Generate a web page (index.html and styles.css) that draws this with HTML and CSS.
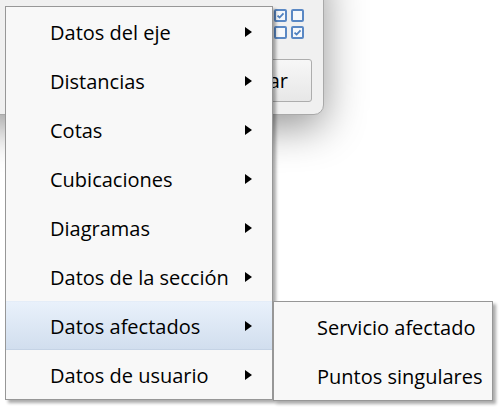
FILE: index.html
```html
<!DOCTYPE html>
<html lang="es">
<head>
<meta charset="utf-8">
<title>Menú</title>
<link rel="stylesheet" href="styles.css">
</head>
<body>
<div class="desktop">
  <div class="dialog">
    <div class="checks">
      <span class="box"><svg viewBox="0 0 9 9" width="9" height="9"><polyline points="1.5,4.6 3.6,6.5 7.5,2.4" fill="none" stroke="#4f80bf" stroke-width="1.8"/></svg></span>
      <span class="box"></span>
      <span class="box"></span>
      <span class="box"><svg viewBox="0 0 9 9" width="9" height="9"><polyline points="1.5,4.6 3.6,6.5 7.5,2.4" fill="none" stroke="#4f80bf" stroke-width="1.8"/></svg></span>
    </div>
    <button class="btn">Aceptar</button>
  </div>

  <div class="menu">
    <div class="item"><span>Datos del eje</span><i class="arrow"></i></div>
    <div class="item"><span>Distancias</span><i class="arrow"></i></div>
    <div class="item"><span>Cotas</span><i class="arrow"></i></div>
    <div class="item"><span>Cubicaciones</span><i class="arrow"></i></div>
    <div class="item"><span>Diagramas</span><i class="arrow"></i></div>
    <div class="item"><span>Datos de la sección</span><i class="arrow"></i></div>
    <div class="item active"><span>Datos afectados</span><i class="arrow"></i></div>
    <div class="item"><span>Datos de usuario</span><i class="arrow"></i></div>
  </div>

  <div class="submenu">
    <div class="item sub"><span>Servicio afectado</span></div>
    <div class="item sub"><span>Puntos singulares</span></div>
  </div>
</div>
</body>
</html>
```

FILE: styles.css
```css
html, body {
  margin: 0;
  padding: 0;
  background: #ffffff;
}

.desktop {
  position: relative;
  width: 503px;
  height: 408px;
  overflow: hidden;
  font-family: "Open Sans", "Noto Sans", "DejaVu Sans", sans-serif;
  color: #000;
}

.dialog {
  position: absolute;
  left: -30px;
  top: -40px;
  width: 354px;
  height: 155px;
  box-sizing: border-box;
  background: #f0f0f0;
  border: 1px solid #a9a9a9;
  border-radius: 0 0 10px 0;
  box-shadow: 0 12px 42px rgba(0, 0, 0, 0.42);
  display: flex;
  flex-direction: column;
  align-items: flex-end;
  padding: 48px 11px 0 0;
}

.checks {
  display: grid;
  grid-template-columns: 13px 13px;
  grid-template-rows: 13px 13px;
  column-gap: 4px;
  row-gap: 4px;
  margin-right: 8px;
}

.box {
  box-sizing: border-box;
  width: 13px;
  height: 13px;
  border: 2px solid #5a88c4;
  border-radius: 2px;
  background: #f6f8fb;
  display: flex;
  align-items: center;
  justify-content: center;
}

.box svg {
  display: block;
}

.btn {
  margin-top: 20px;
  height: 43px;
  box-sizing: border-box;
  border: 1px solid #adadad;
  border-radius: 3px;
  background: linear-gradient(#f7f7f7, #e7e7e7);
  font-family: inherit;
  font-size: 20px;
  color: #000;
  padding: 0 23px 0 40px;
}

.menu {
  position: absolute;
  left: 5px;
  top: 6px;
  width: 268px;
  box-sizing: border-box;
  background: #f8f8f8;
  border: 1px solid #979797;
  box-shadow: 3px 3px 3px rgba(0, 0, 0, 0.33);
}

.submenu {
  position: absolute;
  left: 273px;
  top: 301px;
  width: 220px;
  box-sizing: border-box;
  background: #f8f8f8;
  border: 1px solid #979797;
  box-shadow: 3px 3px 3px rgba(0, 0, 0, 0.33);
}

.item {
  height: 49px;
  box-sizing: border-box;
  display: flex;
  align-items: center;
  justify-content: space-between;
  padding: 0 20px 0 44px;
  font-size: 20px;
  white-space: nowrap;
}

.item span {
  position: relative;
  top: 1px;
}

.item.sub {
  padding-left: 43px;
}

.item.active {
  background: linear-gradient(#e9f1fb, #d1deee);
  border-top: 1px solid #e4edf8;
  border-bottom: 1px solid #c5d3e5;
}

.arrow {
  width: 0;
  height: 0;
  border-left: 7px solid #000;
  border-top: 5.5px solid transparent;
  border-bottom: 5.5px solid transparent;
}
```
